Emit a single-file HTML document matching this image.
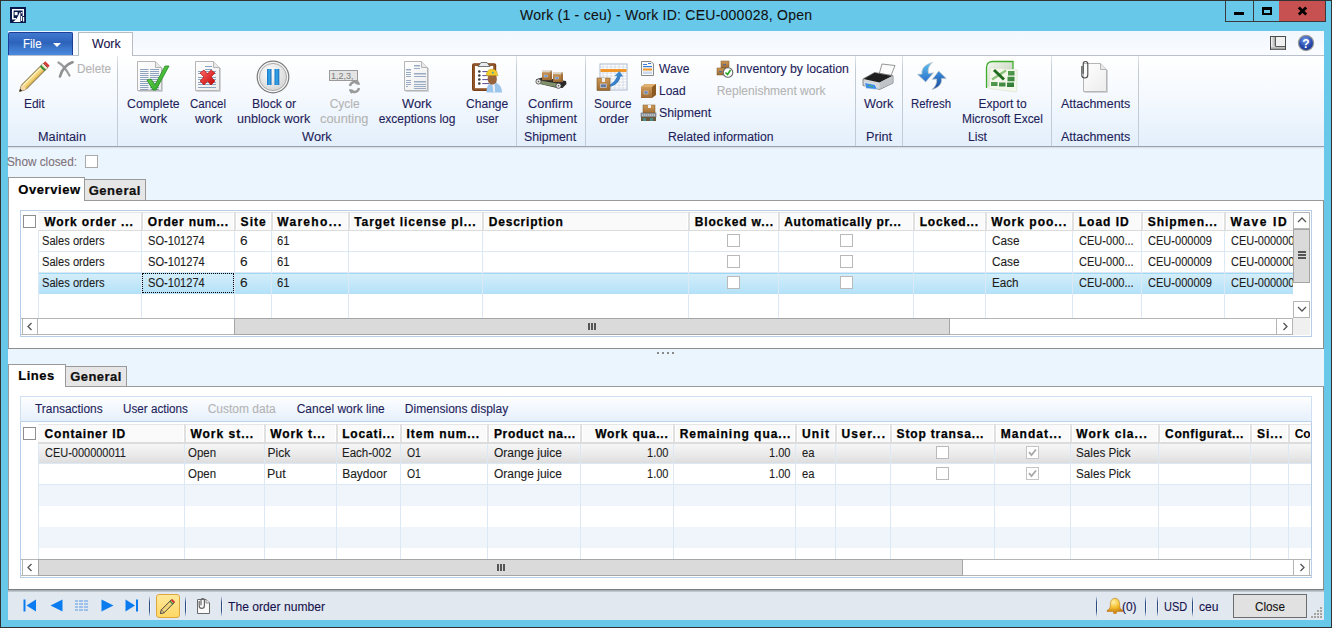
<!DOCTYPE html>
<html><head><meta charset="utf-8"><style>
html,body{margin:0;padding:0;width:1332px;height:628px;overflow:hidden;background:#68c8e9}
#root{position:relative;width:1332px;height:628px;overflow:hidden;font-family:'Liberation Sans', sans-serif}
#root div{position:absolute;box-sizing:border-box}
</style></head><body><div id="root"><div style="left:0px;top:0px;width:1332px;height:628px;background:#68c8e9"></div><div style="left:0px;top:0px;width:1332px;height:1px;background:#333"></div><div style="left:0px;top:0px;width:1px;height:628px;background:#333"></div><div style="left:1331px;top:0px;width:1px;height:628px;background:#333"></div><div style="left:0px;top:627px;width:1332px;height:1px;background:#333"></div><svg style="position:absolute;left:10px;top:7px" width="16" height="16" viewBox="0 0 16 16"><rect width="16" height="16" fill="#08184a"/><path d="M2 14V2H14V12" fill="none" stroke="#fff" stroke-width="0"/><path d="M2 2H14V9H12.6V3.6H3.6V11H6V12.6H2z" fill="#fff"/><rect x="4.6" y="5" width="3" height="3.2" fill="#fff"/><path d="M3 15C6 13 8 10 9.6 5.5L10.4 5.5L10.4 15z" fill="#fff"/><circle cx="11.6" cy="5.8" r="0.8" fill="#fff"/><rect x="11" y="9" width="1.2" height="5" fill="#fff"/><rect x="13" y="10" width="1.2" height="4.6" fill="#fff"/></svg><div style="left:520.00px;top:8px;font:14px/14px 'Liberation Sans', sans-serif;color:#111;white-space:pre;letter-spacing:0.246px;-webkit-text-stroke:0.1px #111;">Work (1 - ceu) - Work ID: CEU-000028, Open</div><div style="left:1225px;top:1px;width:29px;height:21px;background:#68c8e9;border:1px solid #3a3a3a;border-top:none"></div><div style="left:1234px;top:12px;width:10px;height:3px;background:#000"></div><div style="left:1254px;top:1px;width:26px;height:21px;background:#68c8e9;border:1px solid #3a3a3a;border-top:none;border-left:none"></div><div style="left:1262px;top:7px;width:10px;height:8px;border:2px solid #000;border-top-width:3px"></div><div style="left:1279px;top:1px;width:47px;height:21px;background:#c75050;border:1px solid #3a3a3a;border-top:none;border-left:none"></div><svg style="position:absolute;left:1297px;top:6px" width="11" height="10" viewBox="0 0 11 10"><path d="M1.8 1.5L9.2 8.5M9.2 1.5L1.8 8.5" stroke="#000" stroke-width="2.8"/></svg><div style="left:8px;top:31px;width:1316px;height:25px;background:linear-gradient(#f1f7fe,#fafcff)"></div><div style="left:8px;top:55px;width:1316px;height:1px;background:#b9c2cc"></div><div style="left:8px;top:56px;width:1316px;height:90px;background:linear-gradient(#ffffff,#f5f9fe 45%,#e3effc)"></div><div style="left:8px;top:146px;width:1316px;height:1px;background:#9aa3ad"></div><div style="left:8px;top:147px;width:1316px;height:2px;background:linear-gradient(#d4dbe3,#ebf5fe)"></div><div style="left:8px;top:32px;width:65px;height:23px;background:linear-gradient(#4079d0,#2d62ba 45%,#3671c6 60%,#4b8ade);border:1px solid #1d3e98;border-bottom:none;border-radius:2px 2px 0 0"></div><div style="left:23.23px;top:38px;font:12px/12px 'Liberation Sans', sans-serif;color:#fff;white-space:pre;transform:scaleX(0.9581);transform-origin:0 0;-webkit-text-stroke:0.1px #fff;">File</div><svg style="position:absolute;left:53px;top:43px" width="9" height="5" viewBox="0 0 9 5"><path d="M0 0h8L4 4z" fill="#fff"/></svg><div style="left:78px;top:32px;width:55px;height:24px;background:#fff;border:1px solid #b6bcc4;border-bottom:none"></div><div style="left:92.17px;top:38px;font:12px/12px 'Liberation Sans', sans-serif;color:#17124c;white-space:pre;transform:scaleX(1.0313);transform-origin:0 0;-webkit-text-stroke:0.1px #17124c;">Work</div><svg style="position:absolute;left:1270px;top:36px" width="17" height="15" viewBox="0 0 17 15"><defs><linearGradient id="glc" x1="0" y1="0" x2="1" y2="0"><stop offset="0" stop-color="#fafafa"/><stop offset="1" stop-color="#a8a8a8"/></linearGradient><linearGradient id="gbb" x1="0" y1="0" x2="0" y2="1"><stop offset="0" stop-color="#d8d8d8"/><stop offset="1" stop-color="#8a8a8a"/></linearGradient></defs><rect x="0.5" y="0.5" width="15" height="13" fill="#f0f0f0" stroke="#4a4a4a"/><rect x="1" y="1" width="4" height="9.5" fill="url(#glc)"/><rect x="1" y="10.5" width="14" height="3" fill="url(#gbb)"/><path d="M5.5 1V10.5H15" fill="none" stroke="#5a5a5a"/></svg><svg style="position:absolute;left:1297px;top:34px" width="18" height="18" viewBox="0 0 18 18"><defs><radialGradient id="ghp" cx="0.45" cy="0.3" r="0.75"><stop offset="0" stop-color="#7a9ee8"/><stop offset="0.6" stop-color="#2a4eb0"/><stop offset="1" stop-color="#1a3590"/></radialGradient></defs><circle cx="9" cy="9" r="8.2" fill="#9a9a9a"/><circle cx="9" cy="9" r="7" fill="url(#ghp)"/><text x="9" y="13.6" font-family="Liberation Sans" font-weight="bold" font-size="12" fill="#fff" text-anchor="middle">?</text></svg><div style="left:117px;top:56px;width:1px;height:90px;background:linear-gradient(#dfe5ec,#c3cbd4 15%,#c3cbd4)"></div><div style="left:516px;top:56px;width:1px;height:90px;background:linear-gradient(#dfe5ec,#c3cbd4 15%,#c3cbd4)"></div><div style="left:585px;top:56px;width:1px;height:90px;background:linear-gradient(#dfe5ec,#c3cbd4 15%,#c3cbd4)"></div><div style="left:855px;top:56px;width:1px;height:90px;background:linear-gradient(#dfe5ec,#c3cbd4 15%,#c3cbd4)"></div><div style="left:902px;top:56px;width:1px;height:90px;background:linear-gradient(#dfe5ec,#c3cbd4 15%,#c3cbd4)"></div><div style="left:1051px;top:56px;width:1px;height:90px;background:linear-gradient(#dfe5ec,#c3cbd4 15%,#c3cbd4)"></div><div style="left:1138px;top:56px;width:1px;height:90px;background:linear-gradient(#dfe5ec,#c3cbd4 15%,#c3cbd4)"></div><div style="left:24.20px;top:98px;font:12px/12px 'Liberation Sans', sans-serif;color:#1e1e5a;white-space:pre;transform:scaleX(0.9954);transform-origin:0 0;-webkit-text-stroke:0.1px #1e1e5a;">Edit</div><div style="left:127.18px;top:98px;font:12px/12px 'Liberation Sans', sans-serif;color:#1e1e5a;white-space:pre;transform:scaleX(1.0249);transform-origin:0 0;-webkit-text-stroke:0.1px #1e1e5a;">Complete</div><div style="left:139.64px;top:113px;font:12px/12px 'Liberation Sans', sans-serif;color:#1e1e5a;white-space:pre;transform:scaleX(1.0740);transform-origin:0 0;-webkit-text-stroke:0.1px #1e1e5a;">work</div><div style="left:190.23px;top:98px;font:12px/12px 'Liberation Sans', sans-serif;color:#1e1e5a;white-space:pre;transform:scaleX(0.9648);transform-origin:0 0;-webkit-text-stroke:0.1px #1e1e5a;">Cancel</div><div style="left:194.64px;top:113px;font:12px/12px 'Liberation Sans', sans-serif;color:#1e1e5a;white-space:pre;transform:scaleX(1.0740);transform-origin:0 0;-webkit-text-stroke:0.1px #1e1e5a;">work</div><div style="left:251.69px;top:98px;font:12px/12px 'Liberation Sans', sans-serif;color:#1e1e5a;white-space:pre;transform:scaleX(1.0177);transform-origin:0 0;-webkit-text-stroke:0.1px #1e1e5a;">Block or</div><div style="left:236.76px;top:113px;font:12px/12px 'Liberation Sans', sans-serif;color:#1e1e5a;white-space:pre;transform:scaleX(1.0448);transform-origin:0 0;-webkit-text-stroke:0.1px #1e1e5a;">unblock work</div><div style="left:329.70px;top:98px;font:12px/12px 'Liberation Sans', sans-serif;color:#b4b4b4;white-space:pre;-webkit-text-stroke:0.1px #b4b4b4;">Cycle</div><div style="left:319.75px;top:113px;font:12px/12px 'Liberation Sans', sans-serif;color:#b4b4b4;white-space:pre;transform:scaleX(1.0668);transform-origin:0 0;-webkit-text-stroke:0.1px #b4b4b4;">counting</div><div style="left:402.14px;top:98px;font:12px/12px 'Liberation Sans', sans-serif;color:#1e1e5a;white-space:pre;transform:scaleX(1.0695);transform-origin:0 0;-webkit-text-stroke:0.1px #1e1e5a;">Work</div><div style="left:378.70px;top:113px;font:12px/12px 'Liberation Sans', sans-serif;color:#1e1e5a;white-space:pre;-webkit-text-stroke:0.1px #1e1e5a;">exceptions log</div><div style="left:465.79px;top:98px;font:12px/12px 'Liberation Sans', sans-serif;color:#1e1e5a;white-space:pre;transform:scaleX(1.0063);transform-origin:0 0;-webkit-text-stroke:0.1px #1e1e5a;">Change</div><div style="left:475.93px;top:113px;font:12px/12px 'Liberation Sans', sans-serif;color:#1e1e5a;white-space:pre;transform:scaleX(0.9658);transform-origin:0 0;-webkit-text-stroke:0.1px #1e1e5a;">user</div><div style="left:528.44px;top:98px;font:12px/12px 'Liberation Sans', sans-serif;color:#1e1e5a;white-space:pre;transform:scaleX(1.0689);transform-origin:0 0;-webkit-text-stroke:0.1px #1e1e5a;">Confirm</div><div style="left:525.76px;top:113px;font:12px/12px 'Liberation Sans', sans-serif;color:#1e1e5a;white-space:pre;transform:scaleX(1.0445);transform-origin:0 0;-webkit-text-stroke:0.1px #1e1e5a;">shipment</div><div style="left:594.21px;top:98px;font:12px/12px 'Liberation Sans', sans-serif;color:#1e1e5a;white-space:pre;transform:scaleX(0.9882);transform-origin:0 0;-webkit-text-stroke:0.1px #1e1e5a;">Source</div><div style="left:598.65px;top:113px;font:12px/12px 'Liberation Sans', sans-serif;color:#1e1e5a;white-space:pre;transform:scaleX(1.0600);transform-origin:0 0;-webkit-text-stroke:0.1px #1e1e5a;">order</div><div style="left:864.46px;top:98px;font:12px/12px 'Liberation Sans', sans-serif;color:#1e1e5a;white-space:pre;transform:scaleX(1.0542);transform-origin:0 0;-webkit-text-stroke:0.1px #1e1e5a;">Work</div><div style="left:911.24px;top:98px;font:12px/12px 'Liberation Sans', sans-serif;color:#1e1e5a;white-space:pre;transform:scaleX(0.9522);transform-origin:0 0;-webkit-text-stroke:0.1px #1e1e5a;">Refresh</div><div style="left:978.60px;top:98px;font:12px/12px 'Liberation Sans', sans-serif;color:#1e1e5a;white-space:pre;-webkit-text-stroke:0.1px #1e1e5a;">Export to</div><div style="left:961.80px;top:113px;font:12px/12px 'Liberation Sans', sans-serif;color:#1e1e5a;white-space:pre;transform:scaleX(0.9942);transform-origin:0 0;-webkit-text-stroke:0.1px #1e1e5a;">Microsoft Excel</div><div style="left:1060.57px;top:98px;font:12px/12px 'Liberation Sans', sans-serif;color:#1e1e5a;white-space:pre;transform:scaleX(1.0384);transform-origin:0 0;-webkit-text-stroke:0.1px #1e1e5a;">Attachments</div><div style="left:76.71px;top:63px;font:12px/12px 'Liberation Sans', sans-serif;color:#b4b4b4;white-space:pre;transform:scaleX(0.9822);transform-origin:0 0;-webkit-text-stroke:0.1px #b4b4b4;">Delete</div><div style="left:658.70px;top:63px;font:12px/12px 'Liberation Sans', sans-serif;color:#1e1e5a;white-space:pre;transform:scaleX(1.0058);transform-origin:0 0;-webkit-text-stroke:0.1px #1e1e5a;">Wave</div><div style="left:658.70px;top:85px;font:12px/12px 'Liberation Sans', sans-serif;color:#1e1e5a;white-space:pre;transform:scaleX(0.9959);transform-origin:0 0;-webkit-text-stroke:0.1px #1e1e5a;">Load</div><div style="left:658.68px;top:107px;font:12px/12px 'Liberation Sans', sans-serif;color:#1e1e5a;white-space:pre;transform:scaleX(1.0284);transform-origin:0 0;-webkit-text-stroke:0.1px #1e1e5a;">Shipment</div><div style="left:735.58px;top:63px;font:12px/12px 'Liberation Sans', sans-serif;color:#1e1e5a;white-space:pre;transform:scaleX(1.0252);transform-origin:0 0;-webkit-text-stroke:0.1px #1e1e5a;">Inventory by location</div><div style="left:716.70px;top:85px;font:12px/12px 'Liberation Sans', sans-serif;color:#b4b4b4;white-space:pre;-webkit-text-stroke:0.1px #b4b4b4;">Replenishment work</div><div style="left:38.45px;top:131px;font:12px/12px 'Liberation Sans', sans-serif;color:#1e1e5a;white-space:pre;transform:scaleX(1.0581);transform-origin:0 0;-webkit-text-stroke:0.1px #1e1e5a;">Maintain</div><div style="left:302.14px;top:131px;font:12px/12px 'Liberation Sans', sans-serif;color:#1e1e5a;white-space:pre;transform:scaleX(1.0695);transform-origin:0 0;-webkit-text-stroke:0.1px #1e1e5a;">Work</div><div style="left:524.48px;top:131px;font:12px/12px 'Liberation Sans', sans-serif;color:#1e1e5a;white-space:pre;transform:scaleX(1.0284);transform-origin:0 0;-webkit-text-stroke:0.1px #1e1e5a;">Shipment</div><div style="left:667.69px;top:131px;font:12px/12px 'Liberation Sans', sans-serif;color:#1e1e5a;white-space:pre;transform:scaleX(1.0150);transform-origin:0 0;-webkit-text-stroke:0.1px #1e1e5a;">Related information</div><div style="left:865.75px;top:131px;font:12px/12px 'Liberation Sans', sans-serif;color:#1e1e5a;white-space:pre;transform:scaleX(1.0568);transform-origin:0 0;-webkit-text-stroke:0.1px #1e1e5a;">Print</div><div style="left:967.79px;top:131px;font:12px/12px 'Liberation Sans', sans-serif;color:#1e1e5a;white-space:pre;transform:scaleX(1.0183);transform-origin:0 0;-webkit-text-stroke:0.1px #1e1e5a;">List</div><div style="left:1060.57px;top:131px;font:12px/12px 'Liberation Sans', sans-serif;color:#1e1e5a;white-space:pre;transform:scaleX(1.0384);transform-origin:0 0;-webkit-text-stroke:0.1px #1e1e5a;">Attachments</div><div style="left:8px;top:149px;width:1316px;height:471px;background:#ebf5fe"></div><div style="left:7.22px;top:156px;font:12px/12px 'Liberation Sans', sans-serif;color:#7f727a;white-space:pre;transform:scaleX(0.9803);transform-origin:0 0;-webkit-text-stroke:0.1px #7f727a;">Show closed:</div><div style="left:85px;top:155px;width:13px;height:13px;background:#fff;border:1px solid #a9a9a9"></div><div style="left:84px;top:200px;width:1240px;height:1px;background:#9a9a9a"></div><div style="left:84px;top:179px;width:62px;height:22px;background:#e6e6e6;border:1px solid #9a9a9a"></div><div style="left:8px;top:177px;width:77px;height:25px;background:#fff;border:1px solid #9a9a9a;border-bottom:none"></div><div style="left:18.20px;top:183px;font:bold 13px/13px 'Liberation Sans', sans-serif;color:#000;white-space:pre;letter-spacing:0.582px;-webkit-text-stroke:0.2px #000;">Overview</div><div style="left:88.70px;top:184px;font:bold 13px/13px 'Liberation Sans', sans-serif;color:#111;white-space:pre;letter-spacing:0.546px;-webkit-text-stroke:0.2px #000;">General</div><div style="left:8px;top:201px;width:1316px;height:148px;background:#fff;border-right:1px solid #8d8d8d;border-left:1px solid #9a9a9a"></div><div style="left:8px;top:348px;width:1316px;height:1px;background:#8d8d8d"></div><div style="left:20px;top:210px;width:1292px;height:127px;background:#fff;border:1px solid #b8cde6"></div><div style="left:38px;top:212px;width:1255px;height:19px;background:#fafafa;border-top:1px solid #e6e6e6;border-bottom:1px solid #dcdcdc"></div><div style="left:23px;top:215px;width:13px;height:13px;background:#fff;border:1px solid #8e8e8e"></div><div style="left:140px;top:213px;width:4px;height:17px;background:#fff;border-left:1px solid #fff;border-right:1px solid #fff"></div><div style="left:141px;top:212px;width:2px;height:18px;background:#e0e0e0"></div><div style="left:233px;top:213px;width:4px;height:17px;background:#fff;border-left:1px solid #fff;border-right:1px solid #fff"></div><div style="left:234px;top:212px;width:2px;height:18px;background:#e0e0e0"></div><div style="left:270px;top:213px;width:4px;height:17px;background:#fff;border-left:1px solid #fff;border-right:1px solid #fff"></div><div style="left:271px;top:212px;width:2px;height:18px;background:#e0e0e0"></div><div style="left:347px;top:213px;width:4px;height:17px;background:#fff;border-left:1px solid #fff;border-right:1px solid #fff"></div><div style="left:348px;top:212px;width:2px;height:18px;background:#e0e0e0"></div><div style="left:481px;top:213px;width:4px;height:17px;background:#fff;border-left:1px solid #fff;border-right:1px solid #fff"></div><div style="left:482px;top:212px;width:2px;height:18px;background:#e0e0e0"></div><div style="left:687px;top:213px;width:4px;height:17px;background:#fff;border-left:1px solid #fff;border-right:1px solid #fff"></div><div style="left:688px;top:212px;width:2px;height:18px;background:#e0e0e0"></div><div style="left:777px;top:213px;width:4px;height:17px;background:#fff;border-left:1px solid #fff;border-right:1px solid #fff"></div><div style="left:778px;top:212px;width:2px;height:18px;background:#e0e0e0"></div><div style="left:912px;top:213px;width:4px;height:17px;background:#fff;border-left:1px solid #fff;border-right:1px solid #fff"></div><div style="left:913px;top:212px;width:2px;height:18px;background:#e0e0e0"></div><div style="left:984px;top:213px;width:4px;height:17px;background:#fff;border-left:1px solid #fff;border-right:1px solid #fff"></div><div style="left:985px;top:212px;width:2px;height:18px;background:#e0e0e0"></div><div style="left:1071px;top:213px;width:4px;height:17px;background:#fff;border-left:1px solid #fff;border-right:1px solid #fff"></div><div style="left:1072px;top:212px;width:2px;height:18px;background:#e0e0e0"></div><div style="left:1140px;top:213px;width:4px;height:17px;background:#fff;border-left:1px solid #fff;border-right:1px solid #fff"></div><div style="left:1141px;top:212px;width:2px;height:18px;background:#e0e0e0"></div><div style="left:1223px;top:213px;width:4px;height:17px;background:#fff;border-left:1px solid #fff;border-right:1px solid #fff"></div><div style="left:1224px;top:212px;width:2px;height:18px;background:#e0e0e0"></div><div style="left:44.20px;top:216px;font:bold 12px/12px 'Liberation Sans', sans-serif;color:#000;white-space:pre;letter-spacing:0.881px;-webkit-text-stroke:0.25px #000;">Work order ...</div><div style="left:147.80px;top:216px;font:bold 12px/12px 'Liberation Sans', sans-serif;color:#000;white-space:pre;letter-spacing:0.814px;-webkit-text-stroke:0.25px #000;">Order num...</div><div style="left:240.60px;top:216px;font:bold 12px/12px 'Liberation Sans', sans-serif;color:#000;white-space:pre;letter-spacing:1.061px;-webkit-text-stroke:0.25px #000;">Site</div><div style="left:277.20px;top:216px;font:bold 12px/12px 'Liberation Sans', sans-serif;color:#000;white-space:pre;letter-spacing:1.317px;-webkit-text-stroke:0.25px #000;">Wareho...</div><div style="left:354.20px;top:216px;font:bold 12px/12px 'Liberation Sans', sans-serif;color:#000;white-space:pre;letter-spacing:0.926px;-webkit-text-stroke:0.25px #000;">Target license pl...</div><div style="left:488.70px;top:216px;font:bold 12px/12px 'Liberation Sans', sans-serif;color:#000;white-space:pre;letter-spacing:0.808px;-webkit-text-stroke:0.25px #000;">Description</div><div style="left:694.70px;top:216px;font:bold 12px/12px 'Liberation Sans', sans-serif;color:#000;white-space:pre;letter-spacing:0.863px;-webkit-text-stroke:0.25px #000;">Blocked w...</div><div style="left:784.20px;top:216px;font:bold 12px/12px 'Liberation Sans', sans-serif;color:#000;white-space:pre;letter-spacing:0.736px;-webkit-text-stroke:0.25px #000;">Automatically pr...</div><div style="left:919.70px;top:216px;font:bold 12px/12px 'Liberation Sans', sans-serif;color:#000;white-space:pre;letter-spacing:0.798px;-webkit-text-stroke:0.25px #000;">Locked...</div><div style="left:991.20px;top:216px;font:bold 12px/12px 'Liberation Sans', sans-serif;color:#000;white-space:pre;letter-spacing:0.999px;-webkit-text-stroke:0.25px #000;">Work poo...</div><div style="left:1078.70px;top:216px;font:bold 12px/12px 'Liberation Sans', sans-serif;color:#000;white-space:pre;letter-spacing:1.017px;-webkit-text-stroke:0.25px #000;">Load ID</div><div style="left:1147.80px;top:216px;font:bold 12px/12px 'Liberation Sans', sans-serif;color:#000;white-space:pre;letter-spacing:0.924px;-webkit-text-stroke:0.25px #000;">Shipmen...</div><div style="left:1230.60px;top:216px;font:bold 12px/12px 'Liberation Sans', sans-serif;color:#000;white-space:pre;letter-spacing:1.658px;-webkit-text-stroke:0.25px #000;">Wave ID</div><div style="left:38px;top:251px;width:1255px;height:1px;background:#dde8f5"></div><div style="left:38px;top:272px;width:1255px;height:1px;background:#dde8f5"></div><div style="left:38px;top:273px;width:1255px;height:21px;background:linear-gradient(#d5eefb,#b3e1f8)"></div><div style="left:38px;top:273px;width:1255px;height:1px;background:#9fd8f4"></div><div style="left:141px;top:231px;width:1px;height:87px;background:#dde8f5"></div><div style="left:234px;top:231px;width:1px;height:87px;background:#dde8f5"></div><div style="left:271px;top:231px;width:1px;height:87px;background:#dde8f5"></div><div style="left:348px;top:231px;width:1px;height:87px;background:#dde8f5"></div><div style="left:482px;top:231px;width:1px;height:87px;background:#dde8f5"></div><div style="left:688px;top:231px;width:1px;height:87px;background:#dde8f5"></div><div style="left:778px;top:231px;width:1px;height:87px;background:#dde8f5"></div><div style="left:913px;top:231px;width:1px;height:87px;background:#dde8f5"></div><div style="left:985px;top:231px;width:1px;height:87px;background:#dde8f5"></div><div style="left:1072px;top:231px;width:1px;height:87px;background:#dde8f5"></div><div style="left:1141px;top:231px;width:1px;height:87px;background:#dde8f5"></div><div style="left:1224px;top:231px;width:1px;height:87px;background:#dde8f5"></div><div style="left:38px;top:231px;width:1px;height:87px;background:#dde8f5"></div><div style="left:142px;top:273px;width:92px;height:20px;border:1px dotted #000"></div><div style="left:41.66px;top:235px;font:12px/12px 'Liberation Sans', sans-serif;color:#1c1c1c;white-space:pre;transform:scaleX(0.9274);transform-origin:0 0;-webkit-text-stroke:0.1px #1c1c1c;">Sales orders</div><div style="left:147.86px;top:235px;font:12px/12px 'Liberation Sans', sans-serif;color:#1c1c1c;white-space:pre;transform:scaleX(0.9249);transform-origin:0 0;-webkit-text-stroke:0.1px #1c1c1c;">SO-101274</div><div style="left:240.09px;top:235px;font:12px/12px 'Liberation Sans', sans-serif;color:#1c1c1c;white-space:pre;transform:scaleX(1.1400);transform-origin:0 0;-webkit-text-stroke:0.1px #1c1c1c;">6</div><div style="left:277.25px;top:235px;font:12px/12px 'Liberation Sans', sans-serif;color:#1c1c1c;white-space:pre;transform:scaleX(0.9354);transform-origin:0 0;-webkit-text-stroke:0.1px #1c1c1c;">61</div><div style="left:991.91px;top:235px;font:12px/12px 'Liberation Sans', sans-serif;color:#1c1c1c;white-space:pre;transform:scaleX(0.9843);transform-origin:0 0;-webkit-text-stroke:0.1px #1c1c1c;">Case</div><div style="left:1078.76px;top:235px;font:12px/12px 'Liberation Sans', sans-serif;color:#1c1c1c;white-space:pre;transform:scaleX(0.9211);transform-origin:0 0;-webkit-text-stroke:0.1px #1c1c1c;">CEU-000...</div><div style="left:1147.86px;top:235px;font:12px/12px 'Liberation Sans', sans-serif;color:#1c1c1c;white-space:pre;transform:scaleX(0.9207);transform-origin:0 0;-webkit-text-stroke:0.1px #1c1c1c;">CEU-000009</div><div style="left:727px;top:234px;width:13px;height:13px;background:#fff;border:1px solid #b9b9b9"></div><div style="left:840px;top:234px;width:13px;height:13px;background:#fff;border:1px solid #b9b9b9"></div><div style="left:41.66px;top:256px;font:12px/12px 'Liberation Sans', sans-serif;color:#1c1c1c;white-space:pre;transform:scaleX(0.9274);transform-origin:0 0;-webkit-text-stroke:0.1px #1c1c1c;">Sales orders</div><div style="left:147.86px;top:256px;font:12px/12px 'Liberation Sans', sans-serif;color:#1c1c1c;white-space:pre;transform:scaleX(0.9249);transform-origin:0 0;-webkit-text-stroke:0.1px #1c1c1c;">SO-101274</div><div style="left:240.09px;top:256px;font:12px/12px 'Liberation Sans', sans-serif;color:#1c1c1c;white-space:pre;transform:scaleX(1.1400);transform-origin:0 0;-webkit-text-stroke:0.1px #1c1c1c;">6</div><div style="left:277.25px;top:256px;font:12px/12px 'Liberation Sans', sans-serif;color:#1c1c1c;white-space:pre;transform:scaleX(0.9354);transform-origin:0 0;-webkit-text-stroke:0.1px #1c1c1c;">61</div><div style="left:991.91px;top:256px;font:12px/12px 'Liberation Sans', sans-serif;color:#1c1c1c;white-space:pre;transform:scaleX(0.9843);transform-origin:0 0;-webkit-text-stroke:0.1px #1c1c1c;">Case</div><div style="left:1078.76px;top:256px;font:12px/12px 'Liberation Sans', sans-serif;color:#1c1c1c;white-space:pre;transform:scaleX(0.9211);transform-origin:0 0;-webkit-text-stroke:0.1px #1c1c1c;">CEU-000...</div><div style="left:1147.86px;top:256px;font:12px/12px 'Liberation Sans', sans-serif;color:#1c1c1c;white-space:pre;transform:scaleX(0.9207);transform-origin:0 0;-webkit-text-stroke:0.1px #1c1c1c;">CEU-000009</div><div style="left:727px;top:255px;width:13px;height:13px;background:#fff;border:1px solid #b9b9b9"></div><div style="left:840px;top:255px;width:13px;height:13px;background:#fff;border:1px solid #b9b9b9"></div><div style="left:41.66px;top:277px;font:12px/12px 'Liberation Sans', sans-serif;color:#1c1c1c;white-space:pre;transform:scaleX(0.9274);transform-origin:0 0;-webkit-text-stroke:0.1px #1c1c1c;">Sales orders</div><div style="left:147.86px;top:277px;font:12px/12px 'Liberation Sans', sans-serif;color:#1c1c1c;white-space:pre;transform:scaleX(0.9249);transform-origin:0 0;-webkit-text-stroke:0.1px #1c1c1c;">SO-101274</div><div style="left:240.09px;top:277px;font:12px/12px 'Liberation Sans', sans-serif;color:#1c1c1c;white-space:pre;transform:scaleX(1.1400);transform-origin:0 0;-webkit-text-stroke:0.1px #1c1c1c;">6</div><div style="left:277.25px;top:277px;font:12px/12px 'Liberation Sans', sans-serif;color:#1c1c1c;white-space:pre;transform:scaleX(0.9354);transform-origin:0 0;-webkit-text-stroke:0.1px #1c1c1c;">61</div><div style="left:991.92px;top:277px;font:12px/12px 'Liberation Sans', sans-serif;color:#1c1c1c;white-space:pre;transform:scaleX(0.9705);transform-origin:0 0;-webkit-text-stroke:0.1px #1c1c1c;">Each</div><div style="left:1078.76px;top:277px;font:12px/12px 'Liberation Sans', sans-serif;color:#1c1c1c;white-space:pre;transform:scaleX(0.9211);transform-origin:0 0;-webkit-text-stroke:0.1px #1c1c1c;">CEU-000...</div><div style="left:1147.86px;top:277px;font:12px/12px 'Liberation Sans', sans-serif;color:#1c1c1c;white-space:pre;transform:scaleX(0.9207);transform-origin:0 0;-webkit-text-stroke:0.1px #1c1c1c;">CEU-000009</div><div style="left:727px;top:276px;width:13px;height:13px;background:#fff;border:1px solid #b9b9b9"></div><div style="left:840px;top:276px;width:13px;height:13px;background:#fff;border:1px solid #b9b9b9"></div><div style="left:1225px;top:231px;width:68px;height:18px;overflow:hidden"><div style="left:5.67px;top:4px;font:12px/12px 'Liberation Sans', sans-serif;color:#1c1c1c;white-space:pre;transform:scaleX(0.9132);transform-origin:0 0;-webkit-text-stroke:0.1px #1c1c1c;">CEU-0000000</div></div><div style="left:1225px;top:252px;width:68px;height:18px;overflow:hidden"><div style="left:5.67px;top:4px;font:12px/12px 'Liberation Sans', sans-serif;color:#1c1c1c;white-space:pre;transform:scaleX(0.9132);transform-origin:0 0;-webkit-text-stroke:0.1px #1c1c1c;">CEU-0000000</div></div><div style="left:1225px;top:273px;width:68px;height:18px;overflow:hidden"><div style="left:5.67px;top:4px;font:12px/12px 'Liberation Sans', sans-serif;color:#1c1c1c;white-space:pre;transform:scaleX(0.9132);transform-origin:0 0;-webkit-text-stroke:0.1px #1c1c1c;">CEU-0000000</div></div><div style="left:21px;top:318px;width:1272px;height:17px;background:#fff;border-top:1px solid #b5b5b5;border-bottom:1px solid #b5b5b5"></div><div style="left:22px;top:318px;width:16px;height:17px;background:#fff;border:1px solid #b5b5b5"></div><svg style="position:absolute;left:26px;top:322px" width="8" height="9" viewBox="0 0 8 9"><path d="M5.5 1L2 4.5L5.5 8" fill="none" stroke="#555" stroke-width="1.3"/></svg><div style="left:234px;top:318px;width:716px;height:17px;background:#dadada;border:1px solid #a5a5a5"></div><div style="left:588px;top:323px;width:2px;height:7px;background:#555"></div><div style="left:591px;top:323px;width:2px;height:7px;background:#555"></div><div style="left:594px;top:323px;width:2px;height:7px;background:#555"></div><div style="left:1276px;top:318px;width:17px;height:17px;background:#fff;border:1px solid #b5b5b5"></div><svg style="position:absolute;left:1281px;top:322px" width="8" height="9" viewBox="0 0 8 9"><path d="M2.5 1L6 4.5L2.5 8" fill="none" stroke="#555" stroke-width="1.3"/></svg><div style="left:1293px;top:211px;width:18px;height:107px;background:#fff"></div><div style="left:1293px;top:212px;width:17px;height:17px;background:#fff;border:1px solid #b5b5b5"></div><svg style="position:absolute;left:1297px;top:216px" width="10" height="8" viewBox="0 0 10 8"><path d="M1 6L5 2L9 6" fill="none" stroke="#555" stroke-width="1.3"/></svg><div style="left:1293px;top:229px;width:17px;height:54px;background:#dadada;border:1px solid #a5a5a5"></div><div style="left:1298px;top:251px;width:8px;height:2px;background:#555"></div><div style="left:1298px;top:254px;width:8px;height:2px;background:#555"></div><div style="left:1298px;top:257px;width:8px;height:2px;background:#555"></div><div style="left:1293px;top:301px;width:17px;height:17px;background:#fff;border:1px solid #b5b5b5"></div><svg style="position:absolute;left:1297px;top:305px" width="10" height="8" viewBox="0 0 10 8"><path d="M1 2L5 6L9 2" fill="none" stroke="#555" stroke-width="1.3"/></svg><div style="left:1293px;top:318px;width:17px;height:17px;background:#f0f0f0"></div><div style="left:657px;top:352px;width:2px;height:2px;background:#8a8a8a"></div><div style="left:662px;top:352px;width:2px;height:2px;background:#8a8a8a"></div><div style="left:667px;top:352px;width:2px;height:2px;background:#8a8a8a"></div><div style="left:672px;top:352px;width:2px;height:2px;background:#8a8a8a"></div><div style="left:65px;top:386px;width:1259px;height:1px;background:#9a9a9a"></div><div style="left:65px;top:366px;width:62px;height:21px;background:#e6e6e6;border:1px solid #9a9a9a"></div><div style="left:8px;top:364px;width:58px;height:24px;background:#fff;border:1px solid #9a9a9a;border-bottom:none"></div><div style="left:18.20px;top:369px;font:bold 13px/13px 'Liberation Sans', sans-serif;color:#000;white-space:pre;letter-spacing:0.533px;-webkit-text-stroke:0.2px #000;">Lines</div><div style="left:70.20px;top:370px;font:bold 13px/13px 'Liberation Sans', sans-serif;color:#111;white-space:pre;letter-spacing:0.463px;-webkit-text-stroke:0.2px #000;">General</div><div style="left:8px;top:387px;width:1316px;height:203px;background:#fff;border-right:1px solid #8d8d8d;border-left:1px solid #9a9a9a"></div><div style="left:8px;top:589px;width:1316px;height:1px;background:#7d7d7d"></div><div style="left:8px;top:590px;width:1316px;height:3px;background:linear-gradient(#9ea4ab,#e1e8f0)"></div><div style="left:20px;top:396px;width:1292px;height:26px;background:linear-gradient(#fdfeff,#e6f0fc);border:1px solid #d0e0f2;border-bottom-color:#bcd2ea"></div><div style="left:34.91px;top:403px;font:12px/12px 'Liberation Sans', sans-serif;color:#1e1e5a;white-space:pre;transform:scaleX(0.9902);transform-origin:0 0;-webkit-text-stroke:0.1px #1e1e5a;">Transactions</div><div style="left:122.62px;top:403px;font:12px/12px 'Liberation Sans', sans-serif;color:#1e1e5a;white-space:pre;transform:scaleX(0.9738);transform-origin:0 0;-webkit-text-stroke:0.1px #1e1e5a;">User actions</div><div style="left:207.70px;top:403px;font:12px/12px 'Liberation Sans', sans-serif;color:#b4b4b4;white-space:pre;-webkit-text-stroke:0.1px #b4b4b4;">Custom data</div><div style="left:296.70px;top:403px;font:12px/12px 'Liberation Sans', sans-serif;color:#1e1e5a;white-space:pre;-webkit-text-stroke:0.1px #1e1e5a;">Cancel work line</div><div style="left:404.80px;top:403px;font:12px/12px 'Liberation Sans', sans-serif;color:#1e1e5a;white-space:pre;-webkit-text-stroke:0.1px #1e1e5a;">Dimensions display</div><div style="left:20px;top:422px;width:1292px;height:156px;background:#fff;border:1px solid #b8cde6;border-top:none"></div><div style="left:38px;top:424px;width:1273px;height:20px;background:#fafafa;border-top:1px solid #e6e6e6;border-bottom:2px solid #dcdcdc"></div><div style="left:23px;top:427px;width:13px;height:13px;background:#fff;border:1px solid #8e8e8e"></div><div style="left:183px;top:425px;width:4px;height:17px;background:#fff"></div><div style="left:184px;top:424px;width:2px;height:18px;background:#e0e0e0"></div><div style="left:263px;top:425px;width:4px;height:17px;background:#fff"></div><div style="left:264px;top:424px;width:2px;height:18px;background:#e0e0e0"></div><div style="left:335px;top:425px;width:4px;height:17px;background:#fff"></div><div style="left:336px;top:424px;width:2px;height:18px;background:#e0e0e0"></div><div style="left:399px;top:425px;width:4px;height:17px;background:#fff"></div><div style="left:400px;top:424px;width:2px;height:18px;background:#e0e0e0"></div><div style="left:486px;top:425px;width:4px;height:17px;background:#fff"></div><div style="left:487px;top:424px;width:2px;height:18px;background:#e0e0e0"></div><div style="left:579px;top:425px;width:4px;height:17px;background:#fff"></div><div style="left:580px;top:424px;width:2px;height:18px;background:#e0e0e0"></div><div style="left:672px;top:425px;width:4px;height:17px;background:#fff"></div><div style="left:673px;top:424px;width:2px;height:18px;background:#e0e0e0"></div><div style="left:794px;top:425px;width:4px;height:17px;background:#fff"></div><div style="left:795px;top:424px;width:2px;height:18px;background:#e0e0e0"></div><div style="left:834px;top:425px;width:4px;height:17px;background:#fff"></div><div style="left:835px;top:424px;width:2px;height:18px;background:#e0e0e0"></div><div style="left:889px;top:425px;width:4px;height:17px;background:#fff"></div><div style="left:890px;top:424px;width:2px;height:18px;background:#e0e0e0"></div><div style="left:993px;top:425px;width:4px;height:17px;background:#fff"></div><div style="left:994px;top:424px;width:2px;height:18px;background:#e0e0e0"></div><div style="left:1069px;top:425px;width:4px;height:17px;background:#fff"></div><div style="left:1070px;top:424px;width:2px;height:18px;background:#e0e0e0"></div><div style="left:1157px;top:425px;width:4px;height:17px;background:#fff"></div><div style="left:1158px;top:424px;width:2px;height:18px;background:#e0e0e0"></div><div style="left:1249px;top:425px;width:4px;height:17px;background:#fff"></div><div style="left:1250px;top:424px;width:2px;height:18px;background:#e0e0e0"></div><div style="left:1287px;top:425px;width:4px;height:17px;background:#fff"></div><div style="left:1288px;top:424px;width:2px;height:18px;background:#e0e0e0"></div><div style="left:44.60px;top:428px;font:bold 12px/12px 'Liberation Sans', sans-serif;color:#000;white-space:pre;letter-spacing:0.832px;-webkit-text-stroke:0.25px #000;">Container ID</div><div style="left:190.40px;top:428px;font:bold 12px/12px 'Liberation Sans', sans-serif;color:#000;white-space:pre;letter-spacing:1.000px;-webkit-text-stroke:0.25px #000;">Work st...</div><div style="left:270.20px;top:428px;font:bold 12px/12px 'Liberation Sans', sans-serif;color:#000;white-space:pre;letter-spacing:0.934px;-webkit-text-stroke:0.25px #000;">Work t...</div><div style="left:342.20px;top:428px;font:bold 12px/12px 'Liberation Sans', sans-serif;color:#000;white-space:pre;letter-spacing:0.845px;-webkit-text-stroke:0.25px #000;">Locati...</div><div style="left:406.60px;top:428px;font:bold 12px/12px 'Liberation Sans', sans-serif;color:#000;white-space:pre;letter-spacing:0.916px;-webkit-text-stroke:0.25px #000;">Item num...</div><div style="left:493.90px;top:428px;font:bold 12px/12px 'Liberation Sans', sans-serif;color:#000;white-space:pre;letter-spacing:0.709px;-webkit-text-stroke:0.25px #000;">Product na...</div><div style="left:595.20px;top:428px;font:bold 12px/12px 'Liberation Sans', sans-serif;color:#000;white-space:pre;letter-spacing:0.815px;-webkit-text-stroke:0.25px #000;">Work qua...</div><div style="left:679.70px;top:428px;font:bold 12px/12px 'Liberation Sans', sans-serif;color:#000;white-space:pre;letter-spacing:0.972px;-webkit-text-stroke:0.25px #000;">Remaining qua...</div><div style="left:801.90px;top:428px;font:bold 12px/12px 'Liberation Sans', sans-serif;color:#000;white-space:pre;letter-spacing:1.291px;-webkit-text-stroke:0.25px #000;">Unit</div><div style="left:841.40px;top:428px;font:bold 12px/12px 'Liberation Sans', sans-serif;color:#000;white-space:pre;letter-spacing:1.261px;-webkit-text-stroke:0.25px #000;">User...</div><div style="left:896.60px;top:428px;font:bold 12px/12px 'Liberation Sans', sans-serif;color:#000;white-space:pre;letter-spacing:0.830px;-webkit-text-stroke:0.25px #000;">Stop transa...</div><div style="left:1000.70px;top:428px;font:bold 12px/12px 'Liberation Sans', sans-serif;color:#000;white-space:pre;letter-spacing:1.073px;-webkit-text-stroke:0.25px #000;">Mandat...</div><div style="left:1076.20px;top:428px;font:bold 12px/12px 'Liberation Sans', sans-serif;color:#000;white-space:pre;letter-spacing:1.079px;-webkit-text-stroke:0.25px #000;">Work cla...</div><div style="left:1165.10px;top:428px;font:bold 12px/12px 'Liberation Sans', sans-serif;color:#000;white-space:pre;letter-spacing:0.627px;-webkit-text-stroke:0.25px #000;">Configurat...</div><div style="left:1256.90px;top:428px;font:bold 12px/12px 'Liberation Sans', sans-serif;color:#000;white-space:pre;letter-spacing:1.014px;-webkit-text-stroke:0.25px #000;">Si...</div><div style="left:1290px;top:424px;width:20px;height:18px;overflow:hidden"><div style="left:4.70px;top:4px;font:bold 12px/12px 'Liberation Sans', sans-serif;color:#000;white-space:pre;">Co</div></div><div style="left:38px;top:444px;width:1273px;height:19px;background:linear-gradient(#f6f6f6,#e9e9e9 60%,#dddddd)"></div><div style="left:38px;top:464px;width:1273px;height:20px;background:#fff"></div><div style="left:38px;top:485px;width:1273px;height:21px;background:#f0f5fc"></div><div style="left:38px;top:527px;width:1273px;height:21px;background:#f0f5fc"></div><div style="left:38px;top:463px;width:1273px;height:1px;background:#dde8f5"></div><div style="left:38px;top:484px;width:1273px;height:1px;background:#dde8f5"></div><div style="left:184px;top:444px;width:1px;height:115px;background:#dde8f5"></div><div style="left:264px;top:444px;width:1px;height:115px;background:#dde8f5"></div><div style="left:336px;top:444px;width:1px;height:115px;background:#dde8f5"></div><div style="left:400px;top:444px;width:1px;height:115px;background:#dde8f5"></div><div style="left:487px;top:444px;width:1px;height:115px;background:#dde8f5"></div><div style="left:580px;top:444px;width:1px;height:115px;background:#dde8f5"></div><div style="left:673px;top:444px;width:1px;height:115px;background:#dde8f5"></div><div style="left:795px;top:444px;width:1px;height:115px;background:#dde8f5"></div><div style="left:835px;top:444px;width:1px;height:115px;background:#dde8f5"></div><div style="left:890px;top:444px;width:1px;height:115px;background:#dde8f5"></div><div style="left:994px;top:444px;width:1px;height:115px;background:#dde8f5"></div><div style="left:1070px;top:444px;width:1px;height:115px;background:#dde8f5"></div><div style="left:1158px;top:444px;width:1px;height:115px;background:#dde8f5"></div><div style="left:1250px;top:444px;width:1px;height:115px;background:#dde8f5"></div><div style="left:1288px;top:444px;width:1px;height:115px;background:#dde8f5"></div><div style="left:38px;top:444px;width:1px;height:115px;background:#dde8f5"></div><div style="left:44.67px;top:447px;font:12px/12px 'Liberation Sans', sans-serif;color:#1c1c1c;white-space:pre;transform:scaleX(0.9147);transform-origin:0 0;-webkit-text-stroke:0.1px #1c1c1c;">CEU-000000011</div><div style="left:187.84px;top:447px;font:12px/12px 'Liberation Sans', sans-serif;color:#1c1c1c;white-space:pre;transform:scaleX(0.9546);transform-origin:0 0;-webkit-text-stroke:0.1px #1c1c1c;">Open</div><div style="left:267.50px;top:447px;font:12px/12px 'Liberation Sans', sans-serif;color:#1c1c1c;white-space:pre;-webkit-text-stroke:0.1px #1c1c1c;">Pick</div><div style="left:342.23px;top:447px;font:12px/12px 'Liberation Sans', sans-serif;color:#1c1c1c;white-space:pre;transform:scaleX(0.9603);transform-origin:0 0;-webkit-text-stroke:0.1px #1c1c1c;">Each-002</div><div style="left:406.71px;top:447px;font:12px/12px 'Liberation Sans', sans-serif;color:#1c1c1c;white-space:pre;transform:scaleX(0.8671);transform-origin:0 0;-webkit-text-stroke:0.1px #1c1c1c;">O1</div><div style="left:493.90px;top:447px;font:12px/12px 'Liberation Sans', sans-serif;color:#1c1c1c;white-space:pre;-webkit-text-stroke:0.1px #1c1c1c;">Orange juice</div><div style="left:647.26px;top:447px;font:12px/12px 'Liberation Sans', sans-serif;color:#1c1c1c;white-space:pre;transform:scaleX(0.9191);transform-origin:0 0;-webkit-text-stroke:0.1px #1c1c1c;">1.00</div><div style="left:768.76px;top:447px;font:12px/12px 'Liberation Sans', sans-serif;color:#1c1c1c;white-space:pre;transform:scaleX(0.9191);transform-origin:0 0;-webkit-text-stroke:0.1px #1c1c1c;">1.00</div><div style="left:801.95px;top:447px;font:12px/12px 'Liberation Sans', sans-serif;color:#1c1c1c;white-space:pre;transform:scaleX(0.9354);transform-origin:0 0;-webkit-text-stroke:0.1px #1c1c1c;">ea</div><div style="left:1076.22px;top:447px;font:12px/12px 'Liberation Sans', sans-serif;color:#1c1c1c;white-space:pre;transform:scaleX(0.9737);transform-origin:0 0;-webkit-text-stroke:0.1px #1c1c1c;">Sales Pick</div><div style="left:936px;top:446px;width:13px;height:13px;background:#fff;border:1px solid #b9b9b9"></div><div style="left:1026px;top:446px;width:13px;height:13px;background:#fff;border:1px solid #c4c4c4"></div><svg style="position:absolute;left:1027px;top:447px" width="11" height="11" viewBox="0 0 11 11"><path d="M2 5.2L4.5 8L9 2.5" fill="none" stroke="#a8a8a8" stroke-width="1.8"/></svg><div style="left:187.84px;top:468px;font:12px/12px 'Liberation Sans', sans-serif;color:#1c1c1c;white-space:pre;transform:scaleX(0.9546);transform-origin:0 0;-webkit-text-stroke:0.1px #1c1c1c;">Open</div><div style="left:267.47px;top:468px;font:12px/12px 'Liberation Sans', sans-serif;color:#1c1c1c;white-space:pre;transform:scaleX(1.0356);transform-origin:0 0;-webkit-text-stroke:0.1px #1c1c1c;">Put</div><div style="left:342.20px;top:468px;font:12px/12px 'Liberation Sans', sans-serif;color:#1c1c1c;white-space:pre;-webkit-text-stroke:0.1px #1c1c1c;">Baydoor</div><div style="left:406.71px;top:468px;font:12px/12px 'Liberation Sans', sans-serif;color:#1c1c1c;white-space:pre;transform:scaleX(0.8671);transform-origin:0 0;-webkit-text-stroke:0.1px #1c1c1c;">O1</div><div style="left:493.90px;top:468px;font:12px/12px 'Liberation Sans', sans-serif;color:#1c1c1c;white-space:pre;-webkit-text-stroke:0.1px #1c1c1c;">Orange juice</div><div style="left:647.26px;top:468px;font:12px/12px 'Liberation Sans', sans-serif;color:#1c1c1c;white-space:pre;transform:scaleX(0.9191);transform-origin:0 0;-webkit-text-stroke:0.1px #1c1c1c;">1.00</div><div style="left:768.76px;top:468px;font:12px/12px 'Liberation Sans', sans-serif;color:#1c1c1c;white-space:pre;transform:scaleX(0.9191);transform-origin:0 0;-webkit-text-stroke:0.1px #1c1c1c;">1.00</div><div style="left:801.95px;top:468px;font:12px/12px 'Liberation Sans', sans-serif;color:#1c1c1c;white-space:pre;transform:scaleX(0.9354);transform-origin:0 0;-webkit-text-stroke:0.1px #1c1c1c;">ea</div><div style="left:1076.22px;top:468px;font:12px/12px 'Liberation Sans', sans-serif;color:#1c1c1c;white-space:pre;transform:scaleX(0.9737);transform-origin:0 0;-webkit-text-stroke:0.1px #1c1c1c;">Sales Pick</div><div style="left:936px;top:467px;width:13px;height:13px;background:#fff;border:1px solid #b9b9b9"></div><div style="left:1026px;top:467px;width:13px;height:13px;background:#fff;border:1px solid #c4c4c4"></div><svg style="position:absolute;left:1027px;top:468px" width="11" height="11" viewBox="0 0 11 11"><path d="M2 5.2L4.5 8L9 2.5" fill="none" stroke="#a8a8a8" stroke-width="1.8"/></svg><div style="left:21px;top:559px;width:1290px;height:17px;background:#fff;border-top:1px solid #b5b5b5;border-bottom:1px solid #b5b5b5"></div><div style="left:22px;top:559px;width:17px;height:17px;background:#fff;border:1px solid #b5b5b5"></div><svg style="position:absolute;left:26px;top:563px" width="8" height="9" viewBox="0 0 8 9"><path d="M5.5 1L2 4.5L5.5 8" fill="none" stroke="#555" stroke-width="1.3"/></svg><div style="left:38px;top:559px;width:925px;height:17px;background:#dadada;border:1px solid #a5a5a5"></div><div style="left:497px;top:564px;width:2px;height:7px;background:#555"></div><div style="left:500px;top:564px;width:2px;height:7px;background:#555"></div><div style="left:503px;top:564px;width:2px;height:7px;background:#555"></div><div style="left:1293px;top:559px;width:17px;height:17px;background:#fff;border:1px solid #b5b5b5"></div><svg style="position:absolute;left:1298px;top:563px" width="8" height="9" viewBox="0 0 8 9"><path d="M2.5 1L6 4.5L2.5 8" fill="none" stroke="#555" stroke-width="1.3"/></svg><div style="left:8px;top:592px;width:1316px;height:28px;background:#e1e8f0"></div><svg style="position:absolute;left:23px;top:599px" width="14" height="14" viewBox="0 0 14 14"><rect x="0.5" y="0.5" width="2" height="12" fill="#0a7cf0"/><path d="M13 0.5V12.5L3.5 6.5z" fill="#0a7cf0"/></svg><svg style="position:absolute;left:50px;top:599px" width="13" height="14" viewBox="0 0 13 14"><path d="M12.5 0.5V12.5L0.5 6.5z" fill="#0a7cf0"/></svg><svg style="position:absolute;left:75px;top:600px" width="14" height="12" viewBox="0 0 14 12"><g fill="#9cc0ea"><rect x="0" y="0" width="3" height="2"/><rect x="4" y="0" width="4" height="2"/><rect x="9" y="0" width="4" height="2"/><rect x="0" y="3" width="3" height="2"/><rect x="4" y="3" width="4" height="2"/><rect x="9" y="3" width="4" height="2"/><rect x="0" y="6" width="3" height="2"/><rect x="4" y="6" width="4" height="2"/><rect x="9" y="6" width="4" height="2"/><rect x="0" y="9" width="3" height="2"/><rect x="4" y="9" width="4" height="2"/><rect x="9" y="9" width="4" height="2"/></g></svg><svg style="position:absolute;left:101px;top:599px" width="13" height="14" viewBox="0 0 13 14"><path d="M0.5 0.5V12.5L12.5 6.5z" fill="#0a7cf0"/></svg><svg style="position:absolute;left:125px;top:599px" width="14" height="14" viewBox="0 0 14 14"><path d="M0.5 0.5V12.5L10 6.5z" fill="#0a7cf0"/><rect x="11" y="0.5" width="2" height="12" fill="#0a7cf0"/></svg><div style="left:149px;top:596px;width:1px;height:21px;background:linear-gradient(rgba(30,60,110,0),#2a4c80 30%,#2a4c80 70%,rgba(30,60,110,0))"></div><div style="left:150px;top:596px;width:1px;height:21px;background:linear-gradient(rgba(255,255,255,0),rgba(255,255,255,.7) 50%,rgba(255,255,255,0))"></div><div style="left:185px;top:596px;width:1px;height:21px;background:linear-gradient(rgba(30,60,110,0),#2a4c80 30%,#2a4c80 70%,rgba(30,60,110,0))"></div><div style="left:186px;top:596px;width:1px;height:21px;background:linear-gradient(rgba(255,255,255,0),rgba(255,255,255,.7) 50%,rgba(255,255,255,0))"></div><div style="left:221px;top:596px;width:1px;height:21px;background:linear-gradient(rgba(30,60,110,0),#2a4c80 30%,#2a4c80 70%,rgba(30,60,110,0))"></div><div style="left:222px;top:596px;width:1px;height:21px;background:linear-gradient(rgba(255,255,255,0),rgba(255,255,255,.7) 50%,rgba(255,255,255,0))"></div><div style="left:1096px;top:596px;width:1px;height:21px;background:linear-gradient(rgba(30,60,110,0),#2a4c80 30%,#2a4c80 70%,rgba(30,60,110,0))"></div><div style="left:1097px;top:596px;width:1px;height:21px;background:linear-gradient(rgba(255,255,255,0),rgba(255,255,255,.7) 50%,rgba(255,255,255,0))"></div><div style="left:1145px;top:596px;width:1px;height:21px;background:linear-gradient(rgba(30,60,110,0),#2a4c80 30%,#2a4c80 70%,rgba(30,60,110,0))"></div><div style="left:1146px;top:596px;width:1px;height:21px;background:linear-gradient(rgba(255,255,255,0),rgba(255,255,255,.7) 50%,rgba(255,255,255,0))"></div><div style="left:1157px;top:596px;width:1px;height:21px;background:linear-gradient(rgba(30,60,110,0),#2a4c80 30%,#2a4c80 70%,rgba(30,60,110,0))"></div><div style="left:1158px;top:596px;width:1px;height:21px;background:linear-gradient(rgba(255,255,255,0),rgba(255,255,255,.7) 50%,rgba(255,255,255,0))"></div><div style="left:1192px;top:596px;width:1px;height:21px;background:linear-gradient(rgba(30,60,110,0),#2a4c80 30%,#2a4c80 70%,rgba(30,60,110,0))"></div><div style="left:1193px;top:596px;width:1px;height:21px;background:linear-gradient(rgba(255,255,255,0),rgba(255,255,255,.7) 50%,rgba(255,255,255,0))"></div><div style="left:156px;top:594px;width:24px;height:24px;background:linear-gradient(#ffe89a,#ffd866);border:1px solid #e0a83c;border-radius:3px"></div><svg style="position:absolute;left:158px;top:597px" width="20" height="18" viewBox="0 0 20 18"><path d="M2.5 16.5L3.4 12.8L13.5 2.7L16.3 5.5L6.2 15.6z" fill="#f3d57c" stroke="#333" stroke-width="0.9"/><path d="M2.5 16.5L3.4 12.8L6.2 15.6z" fill="#f4d8a8" stroke="#333" stroke-width="0.6"/><path d="M12 4.2L14.8 7" stroke="#2b8a3e" stroke-width="1.2"/><path d="M13.5 2.7L16.3 5.5" stroke="#d93838" stroke-width="2"/></svg><svg style="position:absolute;left:196px;top:597px" width="16" height="18" viewBox="0 0 16 18"><path d="M1.5 2.5H10L13.5 6V16.5H1.5z" fill="#fafafa" stroke="#6a6a6a" stroke-width="1"/><path d="M10 2.5V6H13.5" fill="#f0f0f0" stroke="#7a7a7a" stroke-width="0.8"/><path d="M3.2 4V8.8a2.6 2.6 0 0 0 5.2 0V3.2a1.7 1.7 0 0 0-3.4 0V8.2" fill="none" stroke="#666" stroke-width="1.2"/></svg><div style="left:227.79px;top:601px;font:12px/12px 'Liberation Sans', sans-serif;color:#17124c;white-space:pre;transform:scaleX(1.0101);transform-origin:0 0;-webkit-text-stroke:0.1px #17124c;">The order number</div><svg style="position:absolute;left:1106px;top:597px" width="18" height="18" viewBox="0 0 18 18"><defs><radialGradient id="gbell" cx="0.4" cy="0.3" r="0.8"><stop offset="0" stop-color="#fff2a8"/><stop offset="0.5" stop-color="#f4c030"/><stop offset="1" stop-color="#c47a10"/></radialGradient></defs><path d="M9 1.2C6.2 1.2 4.5 3.5 4.4 6.5L4.2 10C4 11.5 2.5 12.5 1 13.5V14.5H17V13.5C15.5 12.5 14 11.5 13.8 10L13.6 6.5C13.5 3.5 11.8 1.2 9 1.2z" fill="url(#gbell)" stroke="#b87010" stroke-width="0.5"/><ellipse cx="9" cy="15.6" rx="2" ry="1.5" fill="#d08a18"/></svg><div style="left:1122.20px;top:601px;font:12px/12px 'Liberation Sans', sans-serif;color:#17124c;white-space:pre;transform:scaleX(0.9945);transform-origin:0 0;-webkit-text-stroke:0.1px #17124c;">(0)</div><div style="left:1164.17px;top:601px;font:12px/12px 'Liberation Sans', sans-serif;color:#17124c;white-space:pre;transform:scaleX(0.9139);transform-origin:0 0;-webkit-text-stroke:0.1px #17124c;">USD</div><div style="left:1198.89px;top:601px;font:12px/12px 'Liberation Sans', sans-serif;color:#17124c;white-space:pre;transform:scaleX(1.0079);transform-origin:0 0;-webkit-text-stroke:0.1px #17124c;">ceu</div><div style="left:1233px;top:594px;width:74px;height:24px;background:#e1e1e1;border:1px solid #6d6d6d"></div><div style="left:1254.92px;top:601px;font:12px/12px 'Liberation Sans', sans-serif;color:#111;white-space:pre;transform:scaleX(0.9764);transform-origin:0 0;-webkit-text-stroke:0.1px #111;">Close</div><div style="left:1320px;top:607px;width:2px;height:2px;background:#a8a49e"></div><div style="left:1317px;top:610px;width:2px;height:2px;background:#a8a49e"></div><div style="left:1320px;top:610px;width:2px;height:2px;background:#a8a49e"></div><div style="left:1314px;top:613px;width:2px;height:2px;background:#a8a49e"></div><div style="left:1317px;top:613px;width:2px;height:2px;background:#a8a49e"></div><div style="left:1320px;top:613px;width:2px;height:2px;background:#a8a49e"></div><div style="left:1311px;top:616px;width:2px;height:2px;background:#a8a49e"></div><div style="left:1314px;top:616px;width:2px;height:2px;background:#a8a49e"></div><div style="left:1317px;top:616px;width:2px;height:2px;background:#a8a49e"></div><div style="left:1320px;top:616px;width:2px;height:2px;background:#a8a49e"></div><svg style="position:absolute;left:0;top:0" width="0" height="0"><defs>
<linearGradient id="gpage" x1="0" y1="0" x2="1" y2="1"><stop offset="0" stop-color="#ffffff"/><stop offset="1" stop-color="#ececec"/></linearGradient>
<linearGradient id="gbox" x1="0" y1="0" x2="0" y2="1"><stop offset="0" stop-color="#cf9a58"/><stop offset="1" stop-color="#9c6a32"/></linearGradient>
<linearGradient id="gblue" x1="0" y1="0" x2="1" y2="1"><stop offset="0" stop-color="#5aa9e6"/><stop offset="1" stop-color="#1d5fae"/></linearGradient>
<linearGradient id="gbar" x1="0" y1="0" x2="1" y2="0"><stop offset="0" stop-color="#1a73c2"/><stop offset="0.5" stop-color="#35a9ec"/><stop offset="1" stop-color="#1a6bb8"/></linearGradient>
<radialGradient id="gcirc" cx="0.4" cy="0.35" r="0.7"><stop offset="0" stop-color="#ffffff"/><stop offset="1" stop-color="#d4d4d4"/></radialGradient>
<linearGradient id="ggreen" x1="0" y1="0" x2="1" y2="1"><stop offset="0" stop-color="#7be05a"/><stop offset="1" stop-color="#1e9a1e"/></linearGradient>
<linearGradient id="gred" x1="0" y1="0" x2="1" y2="1"><stop offset="0" stop-color="#ff6a6a"/><stop offset="1" stop-color="#c40000"/></linearGradient>
</defs></svg><svg style="position:absolute;left:18px;top:60px" width="33" height="33" viewBox="0 0 33 33"><path d="M1.5 31.5L3.6 25L25.3 3.3L29.7 7.7L8 29.4z" fill="#f3d57c" stroke="#5b4a26" stroke-width="0.9"/><path d="M5 25.5L26 4.5" stroke="#fff2c0" stroke-width="1.3"/><path d="M7.5 28L28.5 7" stroke="#d9a640" stroke-width="1"/><path d="M1.5 31.5L3.6 25Q6.5 25 8 29.4z" fill="#f4d8a8"/><path d="M1.5 31.5L2.2 28.8L4.2 30.8z" fill="#222"/><path d="M22.6 6L27 10.4" stroke="#2b8a3e" stroke-width="2"/><path d="M24.4 4.2L28.8 8.6" stroke="#e8e8e8" stroke-width="1.6"/><path d="M26.4 2.2L30.8 6.6" stroke="#d93838" stroke-width="2.6"/></svg><svg style="position:absolute;left:57px;top:61px" width="17" height="17" viewBox="0 0 17 17"><path d="M1.5 1.5C5 3.5 9 8 12.5 14.5" fill="none" stroke="#9d9d9d" stroke-width="2.2" stroke-linecap="round"/><path d="M15.5 1.2C10 3 5 8 3 15.5" fill="none" stroke="#8f8f8f" stroke-width="2.6" stroke-linecap="round"/></svg><svg style="position:absolute;left:137px;top:61px" width="33" height="32" viewBox="0 0 33 32"><path d="M0.5 0.5H18.5L24.5 6.5V29.5H0.5z" fill="url(#gpage)" stroke="#b5b5b5"/><path d="M18.5 0.5V6.5H24.5" fill="#e8e8e8" stroke="#b5b5b5"/><path d="M1.5 30.5H25.5V7" fill="none" stroke="#d0d4da" stroke-width="1"/><rect x="3" y="8" width="8.5" height="1" fill="#8ea3c0"/><rect x="13" y="8" width="9" height="1" fill="#8ea3c0"/><rect x="3" y="10" width="8.5" height="1" fill="#8ea3c0"/><rect x="13" y="10" width="9" height="1" fill="#8ea3c0"/><rect x="3" y="12" width="8.5" height="1" fill="#8ea3c0"/><rect x="13" y="12" width="9" height="1" fill="#8ea3c0"/><rect x="3" y="14" width="8.5" height="1" fill="#8ea3c0"/><rect x="13" y="14" width="9" height="1" fill="#8ea3c0"/><rect x="3" y="16" width="8.5" height="1" fill="#8ea3c0"/><rect x="13" y="16" width="9" height="1" fill="#8ea3c0"/><rect x="3" y="18" width="8.5" height="1" fill="#8ea3c0"/><rect x="13" y="18" width="9" height="1" fill="#8ea3c0"/><rect x="3" y="20" width="8.5" height="1" fill="#8ea3c0"/><rect x="13" y="20" width="9" height="1" fill="#8ea3c0"/><rect x="3" y="22" width="8.5" height="1" fill="#8ea3c0"/><rect x="13" y="22" width="9" height="1" fill="#8ea3c0"/><rect x="3" y="24" width="8.5" height="1" fill="#8ea3c0"/><rect x="13" y="24" width="9" height="1" fill="#8ea3c0"/><rect x="3" y="26" width="8.5" height="1" fill="#8ea3c0"/><rect x="13" y="26" width="9" height="1" fill="#8ea3c0"/><rect x="3" y="28" width="8.5" height="1" fill="#8ea3c0"/><rect x="13" y="28" width="9" height="1" fill="#8ea3c0"/><path d="M10 19L14 18L18 24L28 5L32 5L19 29L16 29z" fill="url(#ggreen)" stroke="#1f8a1f" stroke-width="0.8"/></svg><svg style="position:absolute;left:195px;top:61px" width="26" height="32" viewBox="0 0 26 32"><path d="M0.5 0.5H18.5L24.5 6.5V29.5H0.5z" fill="url(#gpage)" stroke="#b5b5b5"/><path d="M18.5 0.5V6.5H24.5" fill="#e8e8e8" stroke="#b5b5b5"/><path d="M1.5 30.5H25.5V7" fill="none" stroke="#d0d4da" stroke-width="1"/><rect x="10" y="5" width="7" height="1" fill="#8ea3c0"/><rect x="10" y="8" width="7" height="1" fill="#8ea3c0"/><rect x="3" y="10" width="18" height="1" fill="#8ea3c0"/><rect x="3" y="12" width="18" height="1" fill="#8ea3c0"/><rect x="3" y="16" width="18" height="1" fill="#8ea3c0"/><rect x="3" y="18" width="18" height="1" fill="#8ea3c0"/><rect x="3" y="21" width="18" height="1" fill="#8ea3c0"/><rect x="3" y="23" width="18" height="1" fill="#8ea3c0"/><rect x="3" y="26" width="18" height="1" fill="#8ea3c0"/><path d="M5 12L9 9L12.5 13L16 9L20 12L16 16L20 20L16 24L12.5 20L9 24L5 20L9 16z" fill="url(#gred)" stroke="#a00" stroke-width="0.6"/></svg><svg style="position:absolute;left:256px;top:60px" width="34" height="34" viewBox="0 0 34 34"><circle cx="17" cy="17" r="15.8" fill="#f5f5f5" stroke="#7a7a7a" stroke-width="1.2"/><circle cx="17" cy="17" r="13.6" fill="url(#gcirc)" stroke="#9a9a9a" stroke-width="0.8"/><rect x="11" y="9" width="4.5" height="16" fill="url(#gbar)"/><rect x="18.5" y="9" width="4.8" height="16" fill="url(#gbar)"/></svg><svg style="position:absolute;left:328px;top:69px" width="33" height="25" viewBox="0 0 33 25"><rect x="1.5" y="1.5" width="28" height="10" fill="#e4e4e4" stroke="#9a9a9a"/><text x="3" y="10" font-family="Liberation Sans" font-size="9" fill="#7a7a7a">1,2,3,</text><path d="M22 17a5 5 0 0 1 9-2" fill="none" stroke="#9a9a9a" stroke-width="2.4"/><path d="M31 19a5 5 0 0 1-9 2" fill="none" stroke="#9a9a9a" stroke-width="2.4"/><path d="M30 11L32 16L27 15z" fill="#9a9a9a"/><path d="M23 25L21 20L26 21z" fill="#9a9a9a"/></svg><svg style="position:absolute;left:404px;top:61px" width="26" height="32" viewBox="0 0 26 32"><path d="M0.5 0.5H17.5L23.5 6.5V29.5H0.5z" fill="url(#gpage)" stroke="#b5b5b5"/><path d="M17.5 0.5V6.5H23.5" fill="#e8e8e8" stroke="#b5b5b5"/><path d="M1.5 30.5H24.5V7" fill="none" stroke="#d0d4da" stroke-width="1"/><rect x="10" y="4" width="6" height="1.5" fill="#9aacc4"/><rect x="10" y="7" width="6" height="1" fill="#9aacc4"/><rect x="2" y="8" width="5" height="1.5" fill="#9aacc4"/><rect x="2" y="11" width="5" height="1" fill="#9aacc4"/><rect x="2" y="13" width="5" height="1" fill="#9aacc4"/><rect x="2" y="15" width="5" height="1" fill="#9aacc4"/><rect x="10" y="12" width="12" height="1.5" fill="#9aacc4"/><rect x="10" y="15" width="12" height="1" fill="#9aacc4"/><rect x="2" y="19" width="5" height="1" fill="#9aacc4"/><rect x="2" y="21" width="5" height="1" fill="#9aacc4"/><rect x="2" y="23" width="5" height="1" fill="#9aacc4"/><rect x="2" y="25" width="2" height="1" fill="#9aacc4"/><rect x="10" y="20" width="12" height="1.5" fill="#9aacc4"/><rect x="10" y="23" width="12" height="1" fill="#9aacc4"/><rect x="10" y="25" width="12" height="1" fill="#9aacc4"/><rect x="10" y="27" width="12" height="1" fill="#9aacc4"/></svg><svg style="position:absolute;left:468px;top:58px" width="40" height="38" viewBox="0 0 40 38"><rect x="4" y="5.2" width="24.2" height="27.8" rx="2" fill="#7a4016"/><rect x="5" y="6" width="22" height="26" rx="1.5" fill="#93562a"/><rect x="7" y="8" width="18.2" height="22.2" fill="#fff"/><path d="M10 8.5L13 4.5H19L22 8.5z" fill="#e8ecf0" stroke="#555" stroke-width="0.8"/><circle cx="11.3" cy="13.5" r="1.3" fill="#3a3a3a"/><rect x="14.3" y="13.0" width="7" height="1.1" fill="#6a5aa0"/><circle cx="11.3" cy="17.5" r="1.3" fill="#3a3a3a"/><rect x="14.3" y="17.0" width="7" height="1.1" fill="#6a5aa0"/><circle cx="11.3" cy="21.5" r="1.3" fill="#3a3a3a"/><rect x="14.3" y="21.0" width="7" height="1.1" fill="#6a5aa0"/><circle cx="11.3" cy="25.5" r="1.3" fill="#3a3a3a"/><rect x="14.3" y="25.0" width="7" height="1.1" fill="#6a5aa0"/><path d="M18.5 34.5C18.5 28 20.5 25 25.5 24.5C30.5 25 33.8 28 34 34.5z" fill="#9cc6ec"/><path d="M24.2 25.5L25.5 34H27L26.5 25.5z" fill="#f4f4f4"/><ellipse cx="24.2" cy="21" rx="4.6" ry="5.6" fill="#9a643a"/><path d="M18.3 17.2C18.6 12.8 21 11.2 24 11.2C27.2 11.2 29.2 13 29.4 16.4L30.2 17.6H18.3z" fill="#f2cc2a" stroke="#b89a10" stroke-width="0.5"/><circle cx="24.8" cy="14.7" r="0.9" fill="#3aa0c0"/></svg><svg style="position:absolute;left:532px;top:64px" width="40" height="30" viewBox="0 0 40 30"><path d="M4 15.5L10 13.5L34 17L34.5 20L30.5 24L24 23.8L6 19.5z" fill="#2a2a2a"/><path d="M8.5 16.5L25.5 19.5L24.5 23.2L7.5 19.8z" fill="#80906a"/><rect x="10" y="6.7" width="10" height="9.5" fill="url(#gbox)"/><rect x="10" y="6.7" width="10" height="1.6" fill="#d8d4cc"/><rect x="18" y="6.7" width="2" height="9.5" fill="#8a5a2a" opacity="0.5"/><rect x="21" y="8.6" width="10" height="9.5" fill="url(#gbox)"/><rect x="21" y="8.6" width="10" height="1.6" fill="#d8d4cc"/><rect x="29" y="8.6" width="2" height="9.5" fill="#8a5a2a" opacity="0.5"/><rect x="12" y="11" width="3.5" height="2" fill="#5a88d0" stroke="#eee" stroke-width="0.4"/><rect x="23" y="13" width="3.5" height="2" fill="#5a88d0" stroke="#eee" stroke-width="0.4"/><circle cx="6.5" cy="17.5" r="2.6" fill="#e4e4e4" stroke="#444" stroke-width="0.8"/><circle cx="6.5" cy="17.5" r="0.8" fill="#555"/><circle cx="26.5" cy="21.8" r="2.6" fill="#e4e4e4" stroke="#444" stroke-width="0.8"/><circle cx="26.5" cy="21.8" r="0.8" fill="#555"/></svg><svg style="position:absolute;left:596px;top:63px" width="32" height="29" viewBox="0 0 32 29"><rect x="4" y="1" width="27" height="26" fill="#fff" stroke="#aab8cc"/><path d="M4 4H30" stroke="#d0d8e4" stroke-width="0.8"/><path d="M4 7H30" stroke="#d0d8e4" stroke-width="0.8"/><path d="M4 10H30" stroke="#d0d8e4" stroke-width="0.8"/><path d="M4 13H30" stroke="#d0d8e4" stroke-width="0.8"/><path d="M4 16H30" stroke="#d0d8e4" stroke-width="0.8"/><path d="M4 19H30" stroke="#d0d8e4" stroke-width="0.8"/><path d="M4 22H30" stroke="#d0d8e4" stroke-width="0.8"/><path d="M4 25H30" stroke="#d0d8e4" stroke-width="0.8"/><path d="M7 1V27" stroke="#d0d8e4" stroke-width="0.8"/><path d="M11 1V27" stroke="#d0d8e4" stroke-width="0.8"/><path d="M15 1V27" stroke="#d0d8e4" stroke-width="0.8"/><path d="M19 1V27" stroke="#d0d8e4" stroke-width="0.8"/><path d="M23 1V27" stroke="#d0d8e4" stroke-width="0.8"/><path d="M27 1V27" stroke="#d0d8e4" stroke-width="0.8"/><rect x="4.5" y="6" width="26" height="3" fill="#f0962a"/><path d="M13 22C17 20 20 17 21 13L18.5 13L23.5 8L27 13.5L24.5 13.5C23.5 19 19 23 13 24z" fill="url(#gblue)"/><rect x="1" y="15" width="13" height="12.5" fill="url(#gbox)" stroke="#7a5a2a" stroke-width="0.6"/><rect x="6" y="15" width="3" height="4" fill="#eee"/><rect x="4.5" y="21" width="6" height="3.5" fill="#607aa8" stroke="#ddd" stroke-width="0.6"/></svg><svg style="position:absolute;left:640px;top:60px" width="15" height="17" viewBox="0 0 15 17"><path d="M1.5 1.5H11L13.5 4V15.5H1.5z" fill="#fafafa" stroke="#888"/><rect x="3" y="4" width="4" height="1" fill="#3a7ad0"/><rect x="8" y="3" width="3" height="1" fill="#3a7ad0"/><rect x="3" y="6" width="9" height="1.2" fill="#3a7ad0"/><rect x="3" y="8.5" width="9" height="2" fill="#f0962a"/><rect x="3" y="11.5" width="9" height="2.5" fill="#c8d8ee"/></svg><svg style="position:absolute;left:640px;top:83px" width="17" height="16" viewBox="0 0 17 16"><path d="M1 4L5 1H16V12L12 15H1z" fill="#8a5a22"/><rect x="1" y="4" width="11" height="11" fill="url(#gbox)"/><path d="M1 4L5 1H16L12 4z" fill="#e0b070"/><rect x="4" y="8" width="4" height="3" fill="#6a80a8" stroke="#ddd" stroke-width="0.5"/></svg><svg style="position:absolute;left:640px;top:104px" width="17" height="18" viewBox="0 0 17 18"><rect x="3" y="1" width="12" height="9" fill="url(#gbox)" stroke="#7a5a2a" stroke-width="0.5"/><rect x="8" y="1" width="3" height="3" fill="#eee"/><rect x="1" y="9" width="15" height="4" fill="#9aa0a8" stroke="#555" stroke-width="0.5"/><path d="M2 11H15" stroke="#ddd" stroke-dasharray="1 1"/><rect x="1" y="13" width="15" height="4" fill="#6a5a3a"/><rect x="3" y="14" width="3" height="3" fill="#4a8a8a"/><rect x="10" y="14" width="3" height="3" fill="#4a8a8a"/></svg><svg style="position:absolute;left:716px;top:60px" width="18" height="18" viewBox="0 0 18 18"><rect x="5" y="1" width="8" height="7" fill="url(#gbox)" stroke="#7a5a2a" stroke-width="0.5"/><rect x="1" y="8" width="9" height="7" fill="url(#gbox)" stroke="#7a5a2a" stroke-width="0.5"/><rect x="7" y="4" width="3" height="1.3" fill="#5a6a90"/><rect x="3" y="11" width="3" height="1.3" fill="#5a6a90"/><circle cx="12" cy="12.5" r="4.8" fill="#fff" stroke="#666" stroke-width="1.1"/><path d="M9.5 12.5L11.5 14.5L14.5 10" fill="none" stroke="#22aa22" stroke-width="1.6"/></svg><svg style="position:absolute;left:858px;top:58px" width="40" height="34" viewBox="0 0 40 34"><path d="M24 6L37 7.5L33 17.5L21.3 15.5z" fill="#fbfbfb" stroke="#8a8a8a" stroke-width="0.9"/><path d="M5 21L16.6 14.5L35 17.8V25L21.6 31.5L5 27.5z" fill="#d4d7da" stroke="#6e6e6e" stroke-width="0.8"/><path d="M5.5 21L16.6 14.8L34 18L21.6 24.5z" fill="#1f1f1f"/><path d="M21.6 24.5L34.5 18.2V25L21.6 31z" fill="#c0c4c8"/><path d="M6.5 24.5L17 26.5L19.5 31.5L8 30.5z" fill="#3d8de6" stroke="#eee" stroke-width="0.7"/><path d="M10 27.5L15 28.5" stroke="#4bb06a" stroke-width="1.2"/></svg><svg style="position:absolute;left:915px;top:60px" width="34" height="32" viewBox="0 0 34 32"><defs><linearGradient id="gra" x1="0" y1="0" x2="0" y2="1"><stop offset="0" stop-color="#5ec0f0"/><stop offset="1" stop-color="#2a70c8"/></linearGradient><linearGradient id="grb" x1="0" y1="0" x2="0" y2="1"><stop offset="0" stop-color="#3a8ee0"/><stop offset="1" stop-color="#1a4a98"/></linearGradient></defs><g transform="translate(-915,-60)"><path d="M932.5 62.5C926 64 921 68 922 74L917.5 74.3L925.7 82L933.5 72.8L928.5 73.5C927.5 69 929 65.5 932.5 62.5Z" fill="url(#gra)" stroke="#c4c8cc" stroke-width="0.8"/><path d="M932 89.5C938 88 942.5 84 941.5 78.5L946.3 78.6L938.7 71L932.2 79.6L936.5 79C937 83 935.5 86.5 932 89.5Z" fill="url(#grb)" stroke="#c4c8cc" stroke-width="0.8"/></g></svg><svg style="position:absolute;left:980px;top:56px" width="44" height="40" viewBox="0 0 44 40"><defs><linearGradient id="gxl" x1="0" y1="0" x2="1" y2="1"><stop offset="0" stop-color="#f6f8f2"/><stop offset="1" stop-color="#b8c8b0"/></linearGradient><linearGradient id="gcell" x1="0" y1="0" x2="1" y2="1"><stop offset="0" stop-color="#6ab060"/><stop offset="1" stop-color="#2e7a34"/></linearGradient></defs><g transform="translate(-980,-56)"><path d="M986.5 88V67.5Q986.5 61.5 993 61.5H1013V69" fill="url(#gxl)" stroke="#3cae2a" stroke-width="1.3"/><path d="M990 67.5L1017.5 70L1016.5 92L989 88.5z" fill="#f4f8ea" stroke="#d8e0cc" stroke-width="0.6"/><path d="M1006 70.5L992 79.5" stroke="#8cc27c" stroke-width="2.4"/><path d="M994 70L1004 79.5" stroke="#1e6a1e" stroke-width="3"/><path d="M1008 71H1014.5V75.5H1008z M1007.5 76.8H1014.5V81.2H1007.5z M991 82H997.5V86H991z M999 82.5H1005.5V86.5H999z M1007 82.5H1014V87H1007z" fill="url(#gcell)"/></g></svg><svg style="position:absolute;left:1080px;top:60px" width="28" height="33" viewBox="0 0 28 33"><g transform="translate(3,3)"><path d="M0.5 0.5H17.5L23.5 6.5V28.5H0.5z" fill="url(#gpage)" stroke="#b5b5b5"/><path d="M17.5 0.5V6.5H23.5" fill="#e8e8e8" stroke="#b5b5b5"/><path d="M1.5 29.5H24.5V7" fill="none" stroke="#d0d4da" stroke-width="1"/></g><path d="M1.8 6V15a3 3 0 0 0 6 0V3.8a2.3 2.3 0 0 0-4.6 0V13.8" fill="none" stroke="#4a4a4a" stroke-width="1.1"/></svg></div></body></html>
